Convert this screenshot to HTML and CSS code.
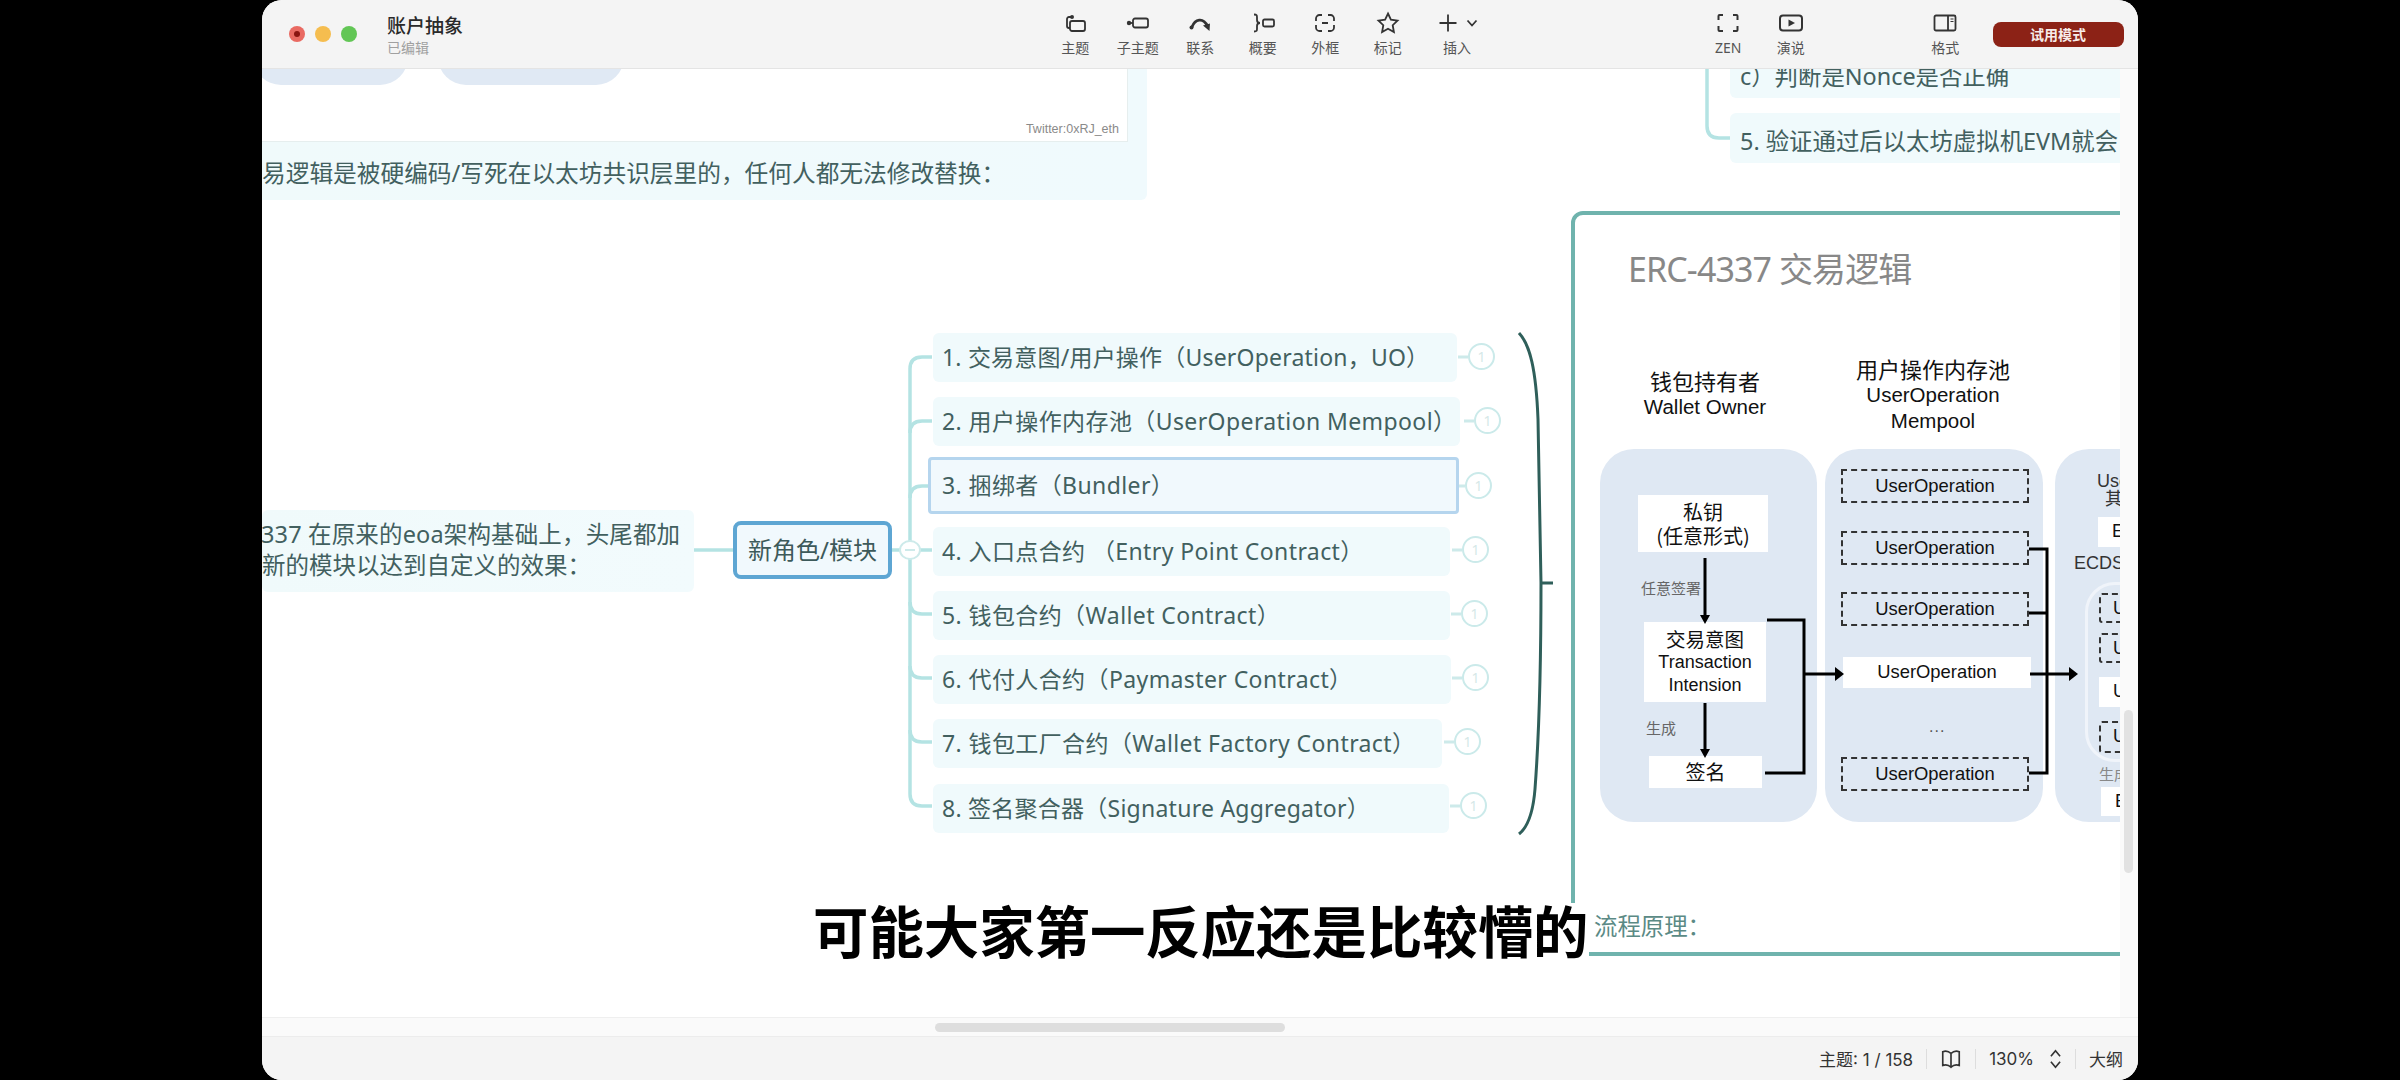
FILE: index.html
```html
<!DOCTYPE html>
<html lang="zh-CN">
<head>
<meta charset="utf-8">
<title>账户抽象</title>
<link rel="stylesheet" href="styles.css">
</head>
<body>
<div class="window">
  <header class="toolbar">
    <div class="lights"><i class="light red"></i><i class="light yellow"></i><i class="light green"></i></div>
    <div class="doc"><div class="doc-title">账户抽象</div><div class="doc-sub">已编辑</div></div>
    <div class="tools tools-a">
      <div class="tool"><svg viewBox="0 0 24 24"><path d="M9 6H6a2 2 0 0 0-2 2v7a2 2 0 0 0 2 2h1"/><circle cx="9" cy="6" r="2" class="fill"/><rect x="7" y="10" width="15" height="10" rx="2"/></svg><span>主题</span></div>
      <div class="tool"><svg viewBox="0 0 24 24"><circle cx="3" cy="12" r="2.2" class="fill"/><path d="M3 12h4"/><rect x="7" y="7.500" width="15" height="9" rx="2"/></svg><span>子主题</span></div>
      <div class="tool"><svg viewBox="0 0 24 24"><path d="M4 16C7 8 15 6 19.500 15" class="thick"/><circle cx="3.500" cy="16.500" r="2" class="fill"/><path d="M15 14.500L22 12.500L21.500 20z" class="fill"/></svg><span>联系</span></div>
      <div class="tool"><svg viewBox="0 0 24 24"><path d="M3 3.500c3 0 3 1 3 3v2.500c0 2 1 3 3 3-2 0-3 1-3 3v2.500c0 2 0 3-3 3"/><rect x="12" y="8.500" width="11" height="7" rx="1.500"/></svg><span>概要</span></div>
      <div class="tool"><svg viewBox="0 0 24 24"><path d="M9 4H6.500A3.500 3.500 0 0 0 3 7.500V10M15 4h2.500A3.500 3.500 0 0 1 21 7.500V10M3 14v2.500A3.500 3.500 0 0 0 6.500 20H9M21 14v2.500A3.500 3.500 0 0 1 17.500 20H15M9 12h6"/></svg><span>外框</span></div>
      <div class="tool"><svg viewBox="0 0 24 24"><path d="M12 2.500l2.900 6.200 6.600.9-4.800 4.600 1.200 6.800-5.900-3.300-5.900 3.300 1.200-6.800L2.500 9.600l6.600-.9z"/></svg><span>标记</span></div>
      <div class="tool tool-insert"><div class="insert-icons"><svg viewBox="0 0 24 24"><path d="M12 3.500v17M3.500 12h17"/></svg><svg class="caret" viewBox="0 0 12 12"><path d="M1.500 3.500l4.500 5 4.500-5"/></svg></div><span>插入</span></div>
    </div>
    <div class="tools tools-b">
      <div class="tool"><svg viewBox="0 0 24 24"><path class="semi" d="M7 4H3.500a1 1 0 0 0-1 1v4M17 4h3.500a1 1 0 0 1 1 1v4M7 20H3.500a1 1 0 0 1-1-1v-4M17 20h3.500a1 1 0 0 0 1-1v-4"/></svg><span>ZEN</span></div>
      <div class="tool"><svg viewBox="0 0 24 24"><rect class="semi" x="1" y="4.500" width="22" height="15" rx="3"/><path d="M9.500 8.500l6.500 3.500-6.500 3.500z" class="fill"/></svg><span>演说</span></div>
    </div>
    <div class="tool tool-format"><svg viewBox="0 0 24 24"><rect x="1.500" y="4.500" width="21" height="15" rx="1.500"/><path d="M15 4.500v15"/><path class="hair" d="M17.500 8h3M17.500 10.500h3"/></svg><span>格式</span></div>
    <button class="trial">试用模式</button>
  </header>

  <div class="workspace">
    <main class="canvas">
      <section class="node-top">
        <div class="pic">
          <i class="blob blob-a"></i><i class="blob blob-b"></i>
          <span class="credit">Twitter:0xRJ_eth</span>
        </div>
        <p class="node-top-text">易逻辑是被硬编码/写死在以太坊共识层里的&#xFF0C;任何人都无法修改替换&#xFF1A;</p>
      </section>

      <svg class="lines" viewBox="0 0 1858 949" width="1858" height="949">
        <path class="ln" d="M1445 0V57q0 12 12 12h11"/>
        <path class="ln" d="M432 481h40"/>
        <path class="ln" d="M670 288h-10q-12 0-12 12V725q0 12 12 12h10"/>
        <path class="ln" d="M670 352h-10q-12 0-12 12M668 417h-8q-12 0-12 12M630 481h40M648 533q0 12 12 12h10M648 597q0 12 12 12h10M648 661q0 12 12 12h10"/>
        <path class="ln thin" d="M1196 288h10M1202 352h10M1197 417h6M1190 481h10M1189 545h10M1190 609h10M1182 673h10M1188 737h10"/>
        <path class="brace" d="M1257 264C1268 276 1274 300 1276 350L1279 514C1279 600 1276 680 1273 720C1271 745 1266 758 1257 765M1279 514h12"/>
      </svg>
      <div class="node-r node-r-c">c&#xFF09;判断是Nonce是否正确</div>
      <div class="node-r node-r-5">5. 验证通过后以太坊虚拟机EVM就会</div>

      <div class="node-left">
        <p class="first">337 在原来的eoa架构基础上&#xFF0C;头尾都加</p>
        <p>新的模块以达到自定义的效果&#xFF1A;</p>
      </div>
      <div class="node-main">新角色/模块</div>
      <div class="collapse"></div>

      <div class="row r1">1. 交易意图/用户操作&#xFF08;UserOperation&#xFF0C;UO&#xFF09;</div><b class="badge b1">1</b>
      <div class="row r2">2. 用户操作内存池&#xFF08;UserOperation Mempool&#xFF09;</div><b class="badge b2">1</b>
      <div class="row r3">3. 捆绑者&#xFF08;Bundler&#xFF09;</div><b class="badge b3">1</b>
      <div class="row r4">4. 入口点合约 &#xFF08;Entry Point Contract&#xFF09;</div><b class="badge b4">1</b>
      <div class="row r5">5. 钱包合约&#xFF08;Wallet Contract&#xFF09;</div><b class="badge b5">1</b>
      <div class="row r6">6. 代付人合约&#xFF08;Paymaster Contract&#xFF09;</div><b class="badge b6">1</b>
      <div class="row r7">7. 钱包工厂合约&#xFF08;Wallet Factory Contract&#xFF09;</div><b class="badge b7">1</b>
      <div class="row r8">8. 签名聚合器&#xFF08;Signature Aggregator&#xFF09;</div><b class="badge b8">1</b>

      <section class="frame">
        <h2 class="frame-title">ERC-4337 交易逻辑</h2>
      </section>
      <div class="head head-1"><strong>钱包持有者</strong><span>Wallet Owner</span></div>
      <div class="head head-2"><strong>用户操作内存池</strong><span>UserOperation</span><span>Mempool</span></div>
      <div class="panel panel-1"></div>
      <div class="panel panel-2"></div>
      <div class="panel panel-3"></div>

      <div class="wbox key"><strong>私钥</strong><strong>(任意形式)</strong></div>
      <div class="note n1">任意签署</div>
      <div class="wbox intent"><strong>交易意图</strong><span>Transaction</span><span>Intension</span></div>
      <div class="note n2">生成</div>
      <div class="wbox sign"><strong>签名</strong></div>

      <div class="uo dash d1">UserOperation</div>
      <div class="uo dash d2">UserOperation</div>
      <div class="uo dash d3">UserOperation</div>
      <div class="uo solid d4">UserOperation</div>
      <div class="dots">...</div>
      <div class="uo dash d5">UserOperation</div>

      <div class="c3 c3-use">UserOperation</div>
      <div class="c3 c3-qi">其</div>
      <div class="c3box c3-e1">EOA</div>
      <div class="c3 c3-ecdsa">ECDSA</div>
      <div class="bundle"></div>
      <div class="c3box dashed c3-u1">UserOp</div>
      <div class="c3box dashed c3-u2">UserOp</div>
      <div class="c3box c3-u3">UserOp</div>
      <div class="c3box dashed c3-u4">UserOp</div>
      <div class="c3 c3-sheng">生成</div>
      <div class="c3box c3-e2">EOA</div>

      <svg class="wires" viewBox="0 0 1858 949" width="1858" height="949">
        <path d="M1443 489V548M1443 634V684"/>
        <path class="head-fill" d="M1438 546h10l-5 9zM1438 680h10l-5 9z"/>
        <path d="M1505 551h37V704H1503M1542 605h35"/>
        <path class="head-fill" d="M1573 598l9 7-9 7z"/>
        <path d="M1767 480h18V704H1767M1767 544h18M1768 605h44"/>
        <path class="head-fill" d="M1807 598l9 7-9 7z"/>
      </svg>

      <div class="flow">流程原理&#xFF1A;</div>
      <div class="subtitle">可能大家第一反应还是比较懵的</div>
    </main>
    <aside class="vscroll"><i class="vthumb"></i></aside>
  </div>

  <div class="hscroll"><i class="hthumb"></i></div>

  <footer class="status">
    <span>主题: 1 / 158</span><i class="sep"></i>
    <svg class="book" viewBox="0 0 24 24"><path d="M12 6C10 4 6 3 3 4v15c3-1 7 0 9 2 2-2 6-3 9-2V4c-3-1-7 0-9 2zM12 6v15"/></svg><i class="sep"></i>
    <span class="zoom-v">130%</span>
    <svg class="chev" viewBox="0 0 14 24"><path d="M2 9l5-6 5 6M2 15l5 6 5-6"/></svg><i class="sep"></i>
    <span>大纲</span>
  </footer>
</div>
</body>
</html>
```
FILE: styles.css
```css
* { box-sizing: border-box; }
html, body { margin: 0; height: 100%; background: #000; overflow: hidden; }
body { font-family: "Noto Sans", "Noto Sans CJK SC", sans-serif; }
p, h2 { margin: 0; }
.window { width: 1876px; height: 1080px; margin-left: 262px; background: #fff; border-radius: 20px; overflow: hidden; display: flex; flex-direction: column; }

.toolbar { flex: 0 0 69px; height: 69px; background: #f4f4f4; border-bottom: 1px solid #e4e4e4; display: flex; align-items: flex-start; position: relative; z-index: 5; }
.lights { display: flex; gap: 10px; margin: 26px 0 0 27px; }
.light { width: 16px; height: 16px; border-radius: 50%; display: block; }
.light.red { background: #e96a62; position: relative; }
.light.red::after { content: ""; position: absolute; left: 5px; top: 5px; width: 6px; height: 6px; border-radius: 50%; background: #8a1410; }
.light.yellow { background: #f5bd4f; }
.light.green { background: #62c655; }
.doc { margin: 14px 0 0 30px; width: 250px; }
.doc-title { font-size: 19px; line-height: 25px; font-weight: 500; color: #2a2a2a; }
.doc-sub { font-size: 14px; line-height: 20px; color: #a0a0a0; margin-top: -1px; }
.tools { display: flex; }
.tools-a { margin-left: 407px; }
.tools-b { margin-left: 202px; }
.tool { width: 62.5px; display: flex; flex-direction: column; align-items: center; padding-top: 11px; color: #555; }
.tool svg { width: 24px; height: 24px; fill: none; stroke: #333; stroke-width: 1.8; }
.tool span { font-size: 14px; line-height: 20px; margin-top: 3px; white-space: nowrap; }
.tool .fill { fill: #333; stroke: none; }
.tool .thick { stroke-width: 2.8; }
.tool .semi { stroke-width: 2; }
.tool .hair { stroke-width: 1; }
.tool-insert { width: 76px; }
.insert-icons { display: flex; align-items: center; gap: 6px; }
.tool .insert-icons .caret { width: 12px; height: 12px; }
.tool-format { margin-left: 92px; }
.trial { margin: 22px 0 0 16px; width: 131px; height: 25px; border: 0; border-radius: 8px; background: #8c2216; color: #f7ecea; font: 600 14px/25px "Noto Sans CJK SC", sans-serif; padding: 0; }

.workspace { flex: 1; min-height: 0; display: flex; background: #fafafa; }
.canvas { position: relative; width: 1858px; background: #fff; overflow: hidden; }
.vscroll { flex: 1; position: relative; }
.vthumb { position: absolute; left: 4px; top: 641px; width: 9px; height: 163px; border-radius: 5px; background: #e2e2e2; }

.hscroll { flex: 0 0 20px; background: #fafafa; border-top: 1px solid #efefef; border-bottom: 1px solid #ececec; position: relative; }
.hthumb { position: absolute; left: 673px; top: 5px; width: 350px; height: 9px; border-radius: 5px; background: #dedede; }

.status { flex: 0 0 43px; background: #f4f4f4; display: flex; align-items: center; justify-content: flex-end; padding-right: 15px; font-size: 17px; color: #333; font-family: Inter, "Noto Sans CJK SC", sans-serif; }
.sep { width: 1px; height: 20px; background: #ddd; margin: 0 13px; }
.book { width: 22px; height: 22px; fill: none; stroke: #333; stroke-width: 1.8; }
.chev { width: 13px; height: 22px; fill: none; stroke: #333; stroke-width: 1.8; margin-left: 15px; }

/* free canvas: origin is x=262, y=69 in the window */
.node-top { position: absolute; left: -10px; top: -40px; width: 895px; height: 171px; background: linear-gradient(90deg, #f0fafb, #f0fafd); border-radius: 6px; }
.pic { position: absolute; left: 0; top: 0; width: 876px; height: 113px; background: #fff; border: 1px solid #e6eeee; border-top: 0; }
.blob { position: absolute; top: 0; height: 56px; background: #e0e9f4; border-radius: 0 0 28px 28px; }
.blob-a { left: 0; width: 155px; }
.blob-b { left: 185px; width: 186px; }
.credit { position: absolute; right: 8px; top: 91px; font: 12.5px/18px "Liberation Sans", sans-serif; color: #8a8a8a; }
.node-top-text { position: absolute; left: 10px; top: 128px; font-size: 23.7px; line-height: 32px; color: #42605f; white-space: nowrap; }

.lines, .wires { position: absolute; left: 0; top: 0; fill: none; }
.ln { stroke: #b4e3e3; stroke-width: 3.5; }
.ln.thin { stroke: #cdeaea; stroke-width: 3; }
.brace { stroke: #2f5f5a; stroke-width: 3; }

.node-r { position: absolute; left: 1468px; width: 420px; background: #f0fafc; border-radius: 6px; font-size: 23.4px; line-height: 32px; color: #42605f; white-space: nowrap; padding-left: 10px; }
.node-r-c { top: -20px; height: 49px; padding-top: 11px; }
.node-r-5 { top: 44px; height: 50px; padding-top: 12px; }

.node-left { position: absolute; left: 0; top: 441px; width: 432px; height: 82px; background: linear-gradient(90deg, #f0fafb, #f2fbfd); border-radius: 6px; padding-top: 9px; font-size: 23.5px; line-height: 31px; color: #42605f; white-space: nowrap; }
.node-left .first { text-indent: -1px; letter-spacing: 0.15px; }
.node-main { position: absolute; left: 471px; top: 452px; width: 159px; height: 58px; border: 4px solid #5ea6d3; border-radius: 8px; background: #f1f9fd; font-size: 24px; line-height: 50px; text-align: center; color: #3d5a5a; }
.collapse { position: absolute; left: 637px; top: 471px; width: 22px; height: 20px; border-radius: 50%; background: #fff; border: 2px solid #cdeaea; }
.collapse::after { content: ""; position: absolute; left: 4px; right: 4px; top: 7px; height: 2px; background: #cdeaea; }

.row { position: absolute; left: 671px; height: 49px; background: #f0fafc; border-radius: 6px; font-size: 23px; line-height: 49px; padding-left: 9px; letter-spacing: 0.4px; color: #42605f; white-space: nowrap; }
.r1 { top: 264px; width: 524px; letter-spacing: 0.2px; }
.r2 { top: 328px; width: 527px; }
.r3 { top: 388px; left: 666px; width: 531px; height: 57px; line-height: 51px; border: 3px solid #b5d5ee; border-radius: 4px; padding-left: 11px; background: #f1f9fd; }
.r4 { top: 458px; width: 517px; }
.r5 { top: 522px; width: 517px; }
.r6 { top: 586px; width: 518px; }
.r7 { top: 650px; width: 509px; }
.r8 { top: 715px; width: 516px; letter-spacing: 0.25px; }

.badge { position: absolute; width: 27px; height: 27px; border: 2px solid #cbeaea; border-radius: 50%; background: #fff; color: #d5e8e8; font: 400 14px/23px "Noto Sans", sans-serif; text-align: center; }
.b1 { left: 1206px; top: 274px; }
.b2 { left: 1212px; top: 338px; }
.b3 { left: 1203px; top: 403px; }
.b4 { left: 1200px; top: 467px; }
.b5 { left: 1199px; top: 531px; }
.b6 { left: 1200px; top: 595px; }
.b7 { left: 1192px; top: 659px; }
.b8 { left: 1198px; top: 723px; }

.frame { position: absolute; left: 1309px; top: 142px; width: 700px; height: 745px; border: 4px solid #6fb3ad; border-radius: 12px; background: #fff; }
.frame-title { position: absolute; left: 53px; top: 30px; font-size: 34px; line-height: 48px; font-weight: 400; letter-spacing: -0.9px; color: #888; white-space: nowrap; }

.head { position: absolute; display: flex; flex-direction: column; align-items: center; transform: translateX(-50%); color: #111; white-space: nowrap; font-family: "Liberation Sans", "Noto Sans CJK SC", sans-serif; font-size: 20.5px; line-height: 26px; }
.head strong { font-family: "Noto Sans CJK SC", sans-serif; font-weight: 400; font-size: 22px; line-height: 28px; }
.head-1 { left: 1443px; top: 297px; }
.head-2 { left: 1671px; top: 285px; }

.panel { position: absolute; top: 380px; height: 373px; background: #dfe8f3; border-radius: 34px; }
.panel-1 { left: 1338px; width: 217px; }
.panel-2 { left: 1563px; width: 218px; }
.panel-3 { left: 1793px; width: 150px; }

.wbox { position: absolute; background: #fff; display: flex; flex-direction: column; align-items: center; justify-content: center; color: #111; font-family: "Liberation Sans", "Noto Sans CJK SC", sans-serif; white-space: nowrap; }
.wbox strong { font-family: "Noto Sans CJK SC", sans-serif; font-weight: 400; font-size: 20px; line-height: 24px; }
.wbox span { font-size: 18px; line-height: 23px; }
.key { left: 1376px; top: 426px; width: 130px; height: 57px; }
.intent { left: 1382px; top: 553px; width: 122px; height: 80px; }
.intent strong { font-size: 19.5px; }
.sign { left: 1387px; top: 687px; width: 113px; height: 32px; }
.note { position: absolute; font-size: 15px; line-height: 20px; color: #666; font-family: "Noto Sans CJK SC", sans-serif; }
.n1 { left: 1379px; top: 509px; }
.n2 { left: 1384px; top: 649px; }

.uo { position: absolute; left: 1579px; width: 188px; text-align: center; font: 18.4px/30px "Liberation Sans", sans-serif; color: #111; }
.uo.dash { border: 2px dashed #333; height: 34px; }
.uo.solid { background: #fff; height: 31px; left: 1581px; }
.d1 { top: 400px; }
.d2 { top: 462px; }
.d3 { top: 523px; }
.d4 { top: 588px; }
.d5 { top: 688px; }
.dots { position: absolute; left: 1667px; top: 648px; font: 16px/20px "Liberation Sans", sans-serif; color: #555; letter-spacing: 1px; }

.c3 { position: absolute; font: 18px/22px "Liberation Sans", "Noto Sans CJK SC", sans-serif; color: #333; white-space: nowrap; }
.c3-use { left: 1835px; top: 401px; }
.c3-qi { left: 1843px; top: 419px; }
.c3-ecdsa { left: 1812px; top: 483px; }
.c3-sheng { left: 1837px; top: 695px; color: #888; font-size: 15px; }
.bundle { position: absolute; left: 1823px; top: 513px; width: 120px; height: 180px; border: 3px solid #f0f4fa; border-radius: 30px; }
.c3box { position: absolute; left: 1836px; width: 100px; background: #fff; font: 18px/28px "Liberation Sans", sans-serif; color: #111; padding-left: 14px; white-space: nowrap; }
.c3box.dashed { background: transparent; border: 2px dashed #333; border-radius: 3px; padding-left: 12px; line-height: 26px; }
.c3-e1 { top: 448px; height: 30px; }
.c3-u1 { top: 524px; height: 30px; left: 1837px; }
.c3-u2 { top: 564px; height: 30px; left: 1837px; }
.c3-u3 { top: 608px; height: 30px; left: 1837px; }
.c3-u4 { top: 652px; height: 32px; left: 1837px; }
.c3-e2 { top: 718px; height: 29px; left: 1839px; }

.wires path { stroke: #000; stroke-width: 3; }
.wires .head-fill { fill: #000; stroke: none; }

.flow { position: absolute; left: 1332px; top: 841px; font-size: 23.4px; line-height: 32px; color: #5b8a85; white-space: nowrap; }
.subtitle { position: absolute; left: 546px; top: 834px; width: 781px; padding: 2px 0 12px 5px; background: #fff; font: 700 55.4px/48px "Noto Sans CJK SC", sans-serif; color: #000; white-space: nowrap; }
```
